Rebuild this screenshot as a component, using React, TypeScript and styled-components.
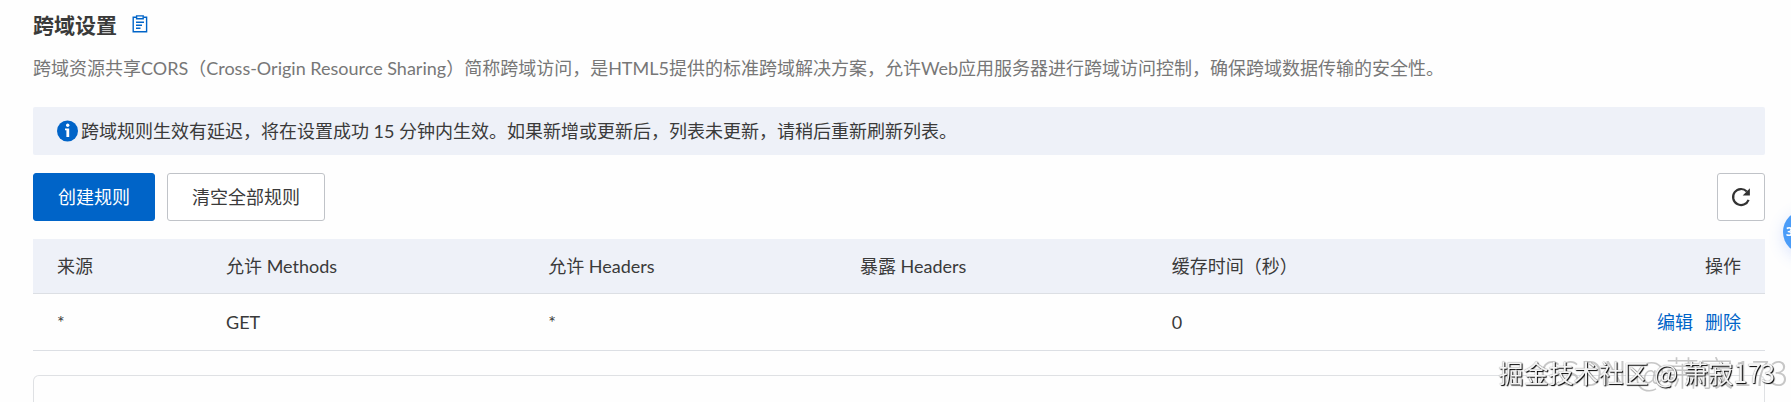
import React from "react";
import styled, { createGlobalStyle } from "styled-components";

const GlobalStyle = createGlobalStyle`
  *, *::before, *::after { box-sizing: border-box; }
  body {
    margin: 0;
    background: #fefefe;
    color: #3a3a3a;
    font-family: Lato, "Noto Sans CJK SC", sans-serif;
    font-size: 18px;
    line-height: 24px;
  }
`;

const Page = styled.main`
  position: relative;
  display: flex;
  flex-direction: column;
  height: 100vh;
  padding: 12px 26px 0 33px;
  overflow: hidden;
`;

const Heading = styled.header`
  display: flex;
  align-items: center;
  gap: 15px;
  height: 26px;
`;

const Title = styled.h1`
  margin: 0;
  font-size: 21px;
  line-height: 26px;
  font-weight: 700;
`;

const DocLink = styled.a`
  display: flex;
  padding-bottom: 2px;
  color: #0064c8;
`;

const Description = styled.p`
  margin: 18px 0 27px;
  color: #777;
`;

const Notice = styled.div`
  display: flex;
  align-items: center;
  gap: 3px;
  min-height: 48px;
  padding: 0 24px;
  border-radius: 2px;
  background: #eef1f8;
`;

const NoticeText = styled.p`
  margin: 0;
`;

const Toolbar = styled.div`
  display: flex;
  align-items: center;
  gap: 12px;
  margin: 18px 0;
`;

const Button = styled.button<{ $primary?: boolean }>`
  height: 48px;
  padding: 0 24px;
  border: 1px solid ${(p) => (p.$primary ? "#0064c8" : "#c0c3c8")};
  border-radius: 3px;
  background: ${(p) => (p.$primary ? "#0064c8" : "#fff")};
  color: ${(p) => (p.$primary ? "#fff" : "#3a3a3a")};
  font: inherit;
  cursor: pointer;
`;

const IconButton = styled(Button)`
  display: flex;
  align-items: center;
  justify-content: center;
  width: 48px;
  margin-left: auto;
  padding: 0;
`;

const Table = styled.table`
  width: 100%;
  table-layout: fixed;
  border-collapse: separate;
  border-spacing: 0;
`;

const Col = styled.col<{ $width?: string }>`
  width: ${(p) => p.$width ?? "auto"};
`;

const HeadCell = styled.th<{ $end?: boolean }>`
  height: 55px;
  padding: 0 24px;
  border-bottom: 1px solid #dcdfe4;
  background: #eef1f8;
  font-weight: 400;
  text-align: ${(p) => (p.$end ? "right" : "left")};
`;

const Cell = styled.td<{ $end?: boolean }>`
  height: 57px;
  padding: 0 24px;
  border-bottom: 1px solid #dcdfe4;
  text-align: ${(p) => (p.$end ? "right" : "left")};
`;

const Actions = styled.div`
  display: flex;
  justify-content: flex-end;
  gap: 12px;
`;

const ActionLink = styled.a`
  color: #0064c8;
  text-decoration: none;
`;

const Panel = styled.section`
  flex: 1;
  margin-top: 24px;
  border: 1px solid #dfe1e4;
  border-bottom: 0;
  border-radius: 6px 6px 0 0;
`;

const FloatingBadge = styled.button`
  position: fixed;
  top: 210px;
  right: -36px;
  width: 44px;
  height: 44px;
  padding: 0 0 0 3px;
  border: 0;
  border-radius: 50%;
  background: #4a9cf8;
  box-shadow: 0 4px 16px rgba(74, 124, 248, 0.2);
  color: #fff;
  font: 700 12px/44px "Noto Sans", sans-serif;
  text-align: left;
`;

const Mark = styled.div`
  position: fixed;
  font-family: "Noto Sans CJK SC", sans-serif;
  white-space: nowrap;
`;

const SiteMark = styled(Mark)`
  right: 3px;
  bottom: 10px;
  color: rgba(180, 180, 180, 0.75);
  font-size: 34px;
  font-weight: 300;
  line-height: 40px;
`;

const AuthorMark = styled(Mark)`
  right: 16px;
  bottom: 14px;
  color: #f4f4f4;
  font-size: 25px;
  line-height: 32px;
  text-shadow: 1px 1px 1px #000, 0 0 1px #777;
`;

const ClipboardIcon = () => (
  <svg width="16" height="18" viewBox="0 0 16 18" fill="none" stroke="currentColor" strokeWidth="1.4" aria-hidden="true">
    <path d="M4 2.2H1.2v14.6h13.4V2.2H12" />
    <path d="M4.6 .9h6.6v2.8H4.6z" />
    <path d="M4 7.2h8M4 10.2h6M4 13.2h4.5" />
  </svg>
);

const InfoIcon = () => (
  <svg width="21" height="22" viewBox="0 0 21 22" aria-hidden="true">
    <circle cx="10.5" cy="11" r="10.5" fill="#0064c8" />
    <circle cx="10.7" cy="5.2" r="1.7" fill="#fff" />
    <path d="M8 8.5h4.2V17H9.4v-6.7H8z" fill="#fff" />
  </svg>
);

const RefreshIcon = () => (
  <svg width="20" height="20" viewBox="0 0 20 20" fill="none" aria-hidden="true">
    <path d="M17.6 12.8A8 8 0 1 1 15.8 4.4" stroke="#333" strokeWidth="2.2" />
    <path d="M18.9 1.2v7.2h-7.2z" fill="#333" />
  </svg>
);

const columns = [
  { label: "来源", width: "9.76%" },
  { label: "允许 Methods", width: "18.6%" },
  { label: "允许 Headers", width: "18%" },
  { label: "暴露 Headers", width: "18%" },
  { label: "缓存时间（秒）", width: "18%" },
  { label: "操作", end: true },
];

const rules = [{ origin: "*", methods: "GET", allowed: "*", exposed: "", maxAge: "0" }];

export default function App() {
  return (
    <>
      <GlobalStyle />
      <Page>
        <Heading>
          <Title>跨域设置</Title>
          <DocLink href="#doc" aria-label="文档">
            <ClipboardIcon />
          </DocLink>
        </Heading>
        <Description>
          跨域资源共享CORS（Cross-Origin Resource Sharing）简称跨域访问，是HTML5提供的标准跨域解决方案，允许Web应用服务器进行跨域访问控制，确保跨域数据传输的安全性。
        </Description>
        <Notice>
          <InfoIcon />
          <NoticeText>跨域规则生效有延迟，将在设置成功 15 分钟内生效。如果新增或更新后，列表未更新，请稍后重新刷新列表。</NoticeText>
        </Notice>
        <Toolbar>
          <Button type="button" $primary>创建规则</Button>
          <Button type="button">清空全部规则</Button>
          <IconButton type="button" aria-label="刷新">
            <RefreshIcon />
          </IconButton>
        </Toolbar>
        <Table>
          <colgroup>
            {columns.map((c) => <Col key={c.label} $width={c.width} />)}
          </colgroup>
          <thead>
            <tr>
              {columns.map((c) => <HeadCell key={c.label} scope="col" $end={c.end}>{c.label}</HeadCell>)}
            </tr>
          </thead>
          <tbody>
            {rules.map((r, i) => (
              <tr key={i}>
                <Cell>{r.origin}</Cell>
                <Cell>{r.methods}</Cell>
                <Cell>{r.allowed}</Cell>
                <Cell>{r.exposed}</Cell>
                <Cell>{r.maxAge}</Cell>
                <Cell $end>
                  <Actions>
                    <ActionLink href="#edit">编辑</ActionLink>
                    <ActionLink href="#delete">删除</ActionLink>
                  </Actions>
                </Cell>
              </tr>
            ))}
          </tbody>
        </Table>
        <Panel />
        <SiteMark>CSDN @萧寂173</SiteMark>
        <AuthorMark>掘金技术社区 @ 萧寂173</AuthorMark>
        <FloatingBadge type="button">3</FloatingBadge>
      </Page>
    </>
  );
}
